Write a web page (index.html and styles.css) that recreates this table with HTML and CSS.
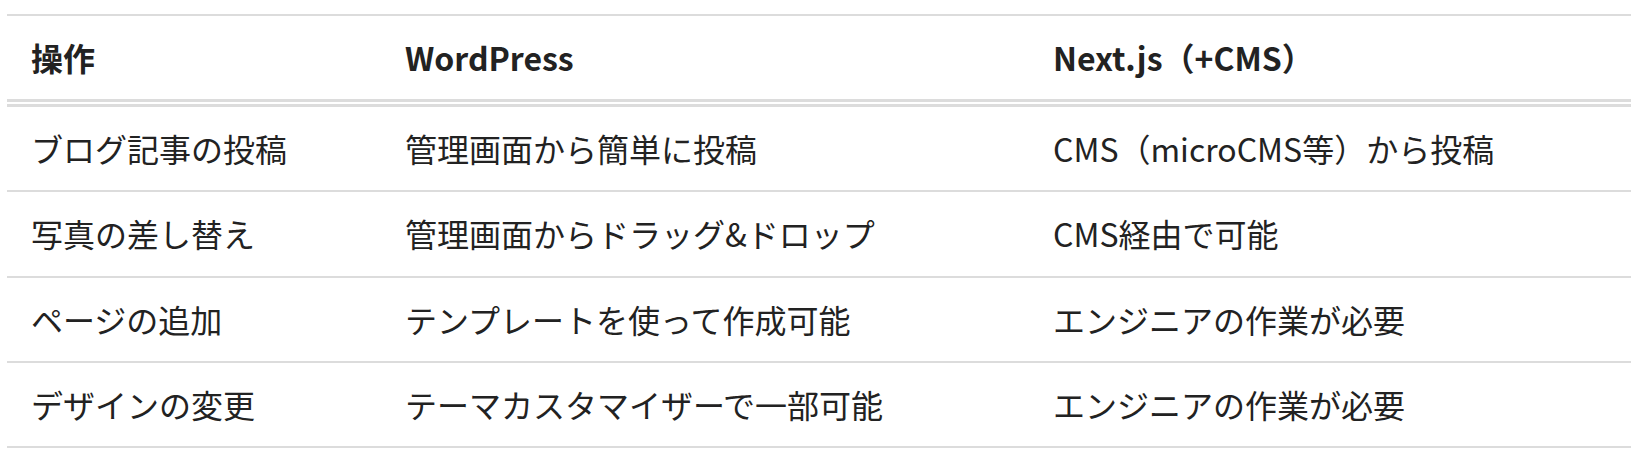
FILE: index.html
```html
<!DOCTYPE html>
<html lang="ja">
<head>
<meta charset="utf-8">
<title>比較表</title>
<link rel="stylesheet" href="styles.css">
</head>
<body>
<div class="wrap">
<table class="compare">
<colgroup>
<col class="c1">
<col class="c2">
<col class="c3">
</colgroup>
<thead>
<tr><th>操作</th><th>WordPress</th><th>Next.js（+CMS）</th></tr>
</thead>
<tbody>
<tr><td>ブログ記事の投稿</td><td>管理画面から簡単に投稿</td><td>CMS（microCMS等）から投稿</td></tr>
<tr><td>写真の差し替え</td><td>管理画面からドラッグ&amp;ドロップ</td><td>CMS経由で可能</td></tr>
<tr><td>ページの追加</td><td>テンプレートを使って作成可能</td><td>エンジニアの作業が必要</td></tr>
<tr><td>デザインの変更</td><td>テーマカスタマイザーで一部可能</td><td>エンジニアの作業が必要</td></tr>
</tbody>
</table>
</div>
</body>
</html>
```

FILE: styles.css
```css
html, body {
  margin: 0;
  padding: 0;
  background: #ffffff;
}

.wrap {
  padding: 14px 7px 0 7px;
}

.compare {
  width: 100%;
  border-collapse: collapse;
  table-layout: fixed;
  font-family: "Noto Sans CJK JP", "Noto Sans", sans-serif;
  font-size: 32px;
  line-height: 1.6;
  color: #222222;
  border-top: 2px solid #dcdcdc;
}

.c1 { width: 374px; }
.c2 { width: 648px; }

.compare th,
.compare td {
  text-align: left;
  padding: 16px 24px;
  vertical-align: middle;
}

.compare th {
  font-weight: 700;
  border-bottom: 8px double #dcdcdc;
}

.compare td {
  font-weight: 400;
  border-bottom: 2px solid #dcdcdc;
}
```
